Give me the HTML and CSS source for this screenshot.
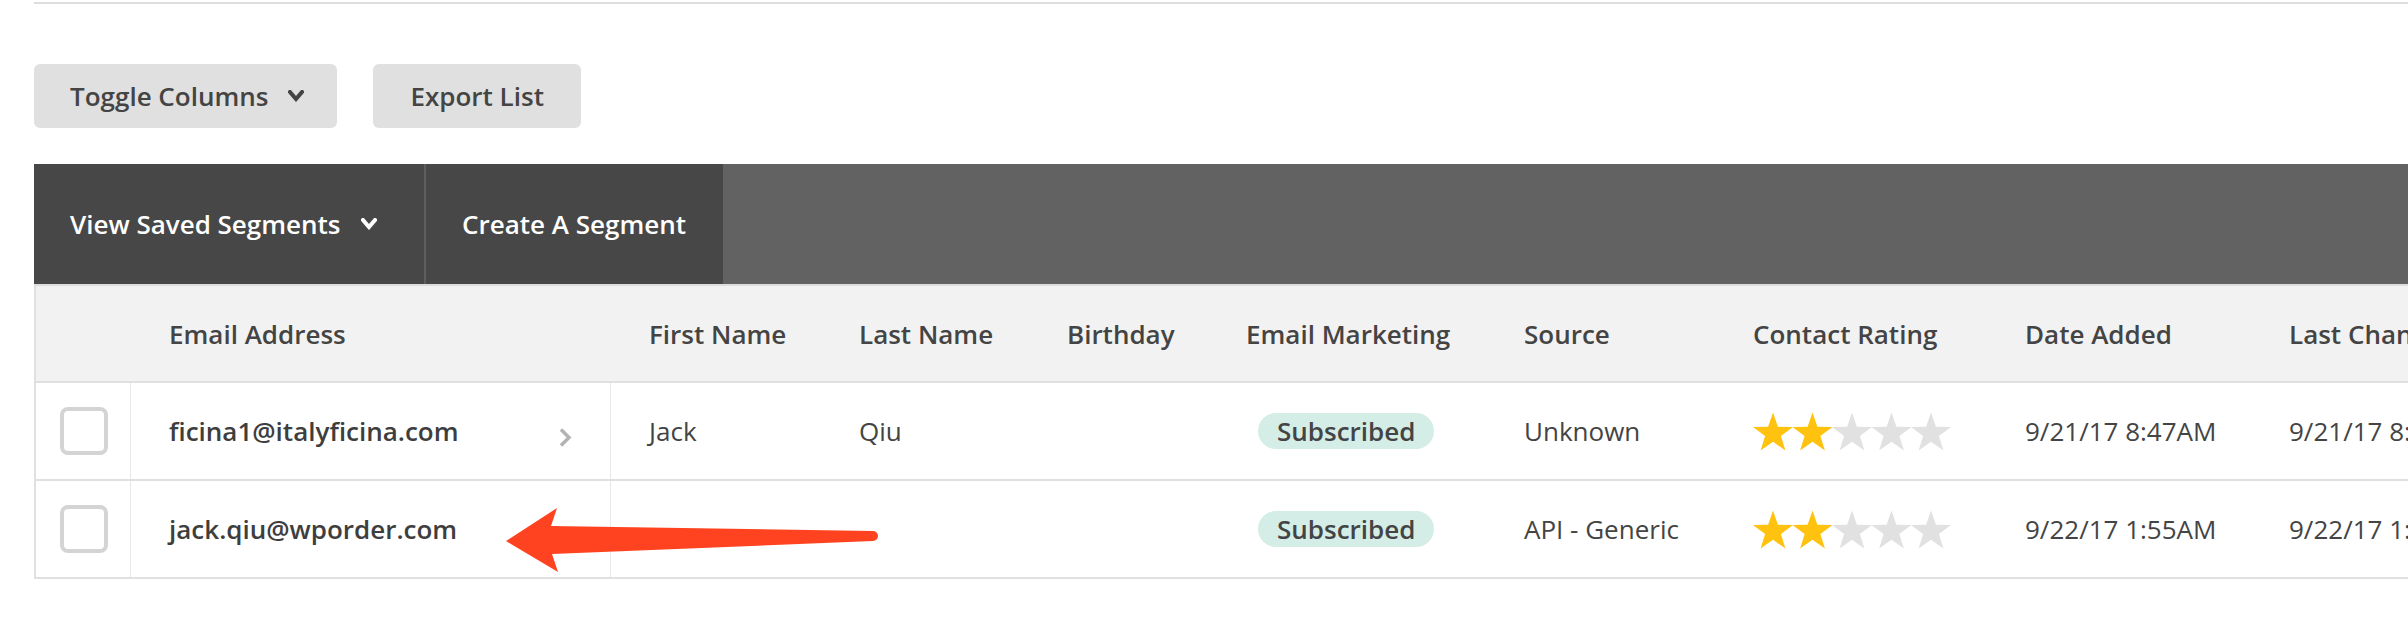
FILE: index.html
```html
<!DOCTYPE html>
<html>
<head>
<meta charset="utf-8">
<link rel="stylesheet" href="styles.css">
</head>
<body>
<svg width="0" height="0" class="defs">
  <defs>
    <symbol id="star" viewBox="0 0 40 40">
      <polygon points="20,0.5 24.9,14.8 40,15 27.9,24.1 32.4,38.5 20,29.8 7.6,38.5 12.1,24.1 0,15 15.1,14.8"/>
    </symbol>
  </defs>
</svg>
<div class="page">
  <div class="topline"></div>
  <div class="toolbar">
    <button class="btn">Toggle Columns <svg class="chev" viewBox="0 0 16 12"><polyline points="2,2 8,9 14,2"/></svg></button>
    <button class="btn">Export List</button>
  </div>
  <div class="segbar">
    <div class="seg-item">View Saved Segments <svg class="chev chev-white" viewBox="0 0 16 12"><polyline points="2,2 8,9 14,2"/></svg></div>
    <div class="seg-item seg-sep">Create A Segment</div>
    <div class="seg-fill"></div>
  </div>
  <div class="table">
    <div class="row head">
      <div class="cell cb"></div>
      <div class="cell email">Email Address</div>
      <div class="cell">First Name</div>
      <div class="cell">Last Name</div>
      <div class="cell">Birthday</div>
      <div class="cell">Email Marketing</div>
      <div class="cell">Source</div>
      <div class="cell">Contact Rating</div>
      <div class="cell">Date Added</div>
      <div class="cell">Last Changed</div>
    </div>
    <div class="row">
      <div class="cell cb"><span class="check"></span></div>
      <div class="cell email strong">ficina1@italyficina.com <svg class="rchev" viewBox="0 0 14 21"><polyline points="3,2.5 11,10.5 3,18.5"/></svg></div>
      <div class="cell">Jack</div>
      <div class="cell">Qiu</div>
      <div class="cell"></div>
      <div class="cell"><span class="pill">Subscribed</span></div>
      <div class="cell">Unknown</div>
      <div class="cell"><svg class="stars" viewBox="0 0 198 40"><use href="#star" x="0" y="0" width="40" height="40" class="on"/><use href="#star" x="39.5" y="0" width="40" height="40" class="on"/><use href="#star" x="79" y="0" width="40" height="40" class="off"/><use href="#star" x="118.5" y="0" width="40" height="40" class="off"/><use href="#star" x="158" y="0" width="40" height="40" class="off"/></svg></div>
      <div class="cell">9/21/17 8:47AM</div>
      <div class="cell">9/21/17 8:47AM</div>
    </div>
    <div class="row">
      <div class="cell cb"><span class="check"></span></div>
      <div class="cell email strong">jack.qiu@wporder.com</div>
      <div class="cell"></div>
      <div class="cell"></div>
      <div class="cell"></div>
      <div class="cell"><span class="pill">Subscribed</span></div>
      <div class="cell">API - Generic</div>
      <div class="cell"><svg class="stars" viewBox="0 0 198 40"><use href="#star" x="0" y="0" width="40" height="40" class="on"/><use href="#star" x="39.5" y="0" width="40" height="40" class="on"/><use href="#star" x="79" y="0" width="40" height="40" class="off"/><use href="#star" x="118.5" y="0" width="40" height="40" class="off"/><use href="#star" x="158" y="0" width="40" height="40" class="off"/></svg></div>
      <div class="cell">9/22/17 1:55AM</div>
      <div class="cell">9/22/17 1:55AM</div>
    </div>
  </div>
  <svg class="arrow" viewBox="0 0 385 80">
    <path d="M6,41 L57,8 L51,26 L373,31 A5,5 0 0 1 373,41 L52,54 L58,72 Z"/>
  </svg>
</div>
</body>
</html>
```
FILE: styles.css
```css
html, body {
  margin: 0;
  padding: 0;
  background: #ffffff;
}
body {
  font-family: "Open Sans", "Noto Sans", sans-serif;
  font-size: 26px;
  color: #444444;
  overflow: hidden;
  width: 2408px;
  height: 630px;
}
.defs {
  position: absolute;
}
.page {
  position: relative;
  padding-left: 34px;
  padding-top: 2px;
}
.topline {
  height: 2px;
  background: #dddddd;
}
.toolbar {
  display: flex;
  gap: 36px;
  margin-top: 60px;
}
.btn {
  height: 64px;
  border: none;
  border-radius: 6px;
  background: #e0e0e0;
  color: #444444;
  font-family: inherit;
  font-size: 26px;
  font-weight: 600;
  padding: 0 37px 0 37px;
  display: flex;
  align-items: center;
  white-space: nowrap;
  cursor: pointer;
}
.btn:first-child {
  padding: 0 33px 0 36px;
}
.chev {
  width: 16px;
  height: 12px;
  margin-left: 20px;
  fill: none;
  stroke: #444444;
  stroke-width: 4;
  stroke-linecap: square;
}
.chev-white {
  stroke: #ffffff;
}
.segbar {
  display: flex;
  height: 120px;
  margin-top: 36px;
  background: #626262;
}
.seg-item {
  display: flex;
  align-items: center;
  background: #474747;
  color: #ffffff;
  font-weight: 600;
  white-space: nowrap;
  flex-shrink: 0;
}
.seg-item:first-child {
  width: 390px;
  box-sizing: border-box;
  padding: 0 0 0 36px;
}
.seg-sep {
  border-left: 2px solid #5e5e5e;
  padding: 0 37px 0 36px;
}
.seg-fill {
  flex: 1;
}
.table {
  border-top: 2px solid #dddddd;
  border-left: 2px solid #e0e0e0;
}
.row {
  display: grid;
  grid-template-columns: 95px 480px 210px 208px 179px 278px 229px 272px 264px 300px;
  height: 96px;
  border-bottom: 2px solid #e0e0e0;
  white-space: nowrap;
}
.row.head {
  height: 95px;
  background: #f2f2f2;
  font-weight: 600;
}
.cell {
  display: flex;
  align-items: center;
  padding-left: 38px;
  overflow: hidden;
}
.cell.cb {
  padding-left: 0;
  justify-content: center;
  border-right: 1px solid #e8e8e8;
}
.row.head .cell.cb,
.row.head .cell.email {
  border-right: none;
}
.cell.email {
  border-right: 1px solid #e8e8e8;
  justify-content: space-between;
  padding-right: 38px;
}
.strong {
  font-weight: 600;
  color: #3e3e3e;
}
.check {
  width: 48px;
  height: 48px;
  box-sizing: border-box;
  border: 4px solid #d4d4d4;
  border-radius: 8px;
  margin-left: 1px;
}
.rchev {
  width: 14px;
  height: 21px;
  margin-top: 12px;
  fill: none;
  stroke: #b3b3b3;
  stroke-width: 3.5;
}
.pill {
  display: inline-block;
  background: #d4ede6;
  color: #444444;
  font-weight: 600;
  height: 36px;
  line-height: 36px;
  padding: 0 19px;
  border-radius: 18px;
  margin-left: 12px;
}
.stars {
  width: 198px;
  height: 40px;
  margin-top: 2px;
}
.stars .on {
  fill: #ffc20f;
}
.stars .off {
  fill: #e1e1e1;
}
.arrow {
  position: absolute;
  left: 500px;
  top: 500px;
  width: 385px;
  height: 80px;
  fill: #ff4320;
}
```
